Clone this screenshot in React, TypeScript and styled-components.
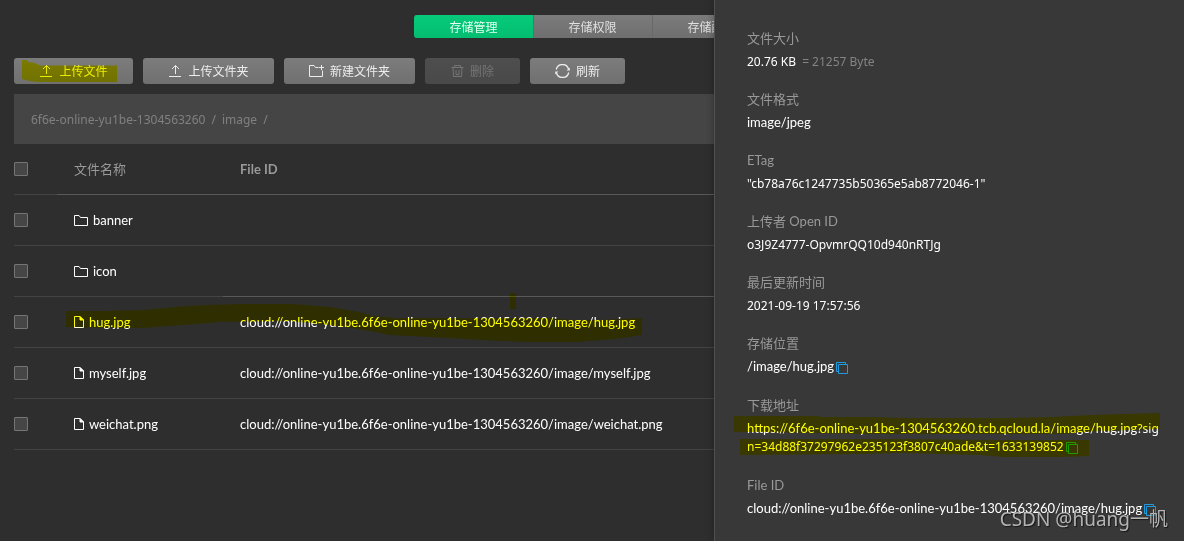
import React from "react";
import styled, { createGlobalStyle } from "styled-components";

const GlobalStyle = createGlobalStyle`
  * { box-sizing: border-box; }
  body {
    margin: 0;
    background: #2e2e2e;
    color: #fff;
    font-family: Lato, "Noto Sans CJK SC", sans-serif;
    font-size: 13px;
    line-height: 18px;
  }
  button { font: inherit; cursor: pointer; }
`;

const codeFont = `
  font-family: "Noto Sans", "Noto Sans CJK SC", sans-serif;
  font-size: 12px;
`;

const Page = styled.div`
  position: relative;
  min-height: 100vh;
  overflow: hidden;
`;

const Main = styled.main`
  padding: 15px 14px 0;
`;

const Tabs = styled.nav`
  display: flex;
  justify-content: center;
  margin-bottom: 20px;
`;

const Tab = styled.button<{ $active?: boolean }>`
  width: 119px;
  height: 23px;
  padding: 2px 0 0;
  border: 0;
  border-left: 1px solid ${(p) => (p.$active ? "#07c577" : "#696969")};
  color: ${(p) => (p.$active ? "#e6fff3" : "#e0e0e0")};
  font-size: 12px;
  background: ${(p) =>
    p.$active ? "linear-gradient(#05cb7a, #04bd70)" : "linear-gradient(#7b7b7b, #6f6f6f)"};
  &:first-child { border-radius: 3px 0 0 3px; }
  &:last-child { border-radius: 0 3px 3px 0; }
`;

const Toolbar = styled.div`
  display: flex;
  gap: 10px;
  margin-bottom: 10px;
`;

const ToolButton = styled.button<{ $width: number }>`
  position: relative;
  display: flex;
  align-items: center;
  justify-content: center;
  gap: 6px;
  width: ${(p) => p.$width}px;
  height: 26px;
  padding: 0;
  border: 0;
  border-radius: 3px;
  color: #ececec;
  font-size: 12px;
  background: linear-gradient(#7c7c7c, #707070);
  &:disabled {
    color: #757575;
    background: linear-gradient(#4e4e4e, #494949);
    cursor: default;
  }
`;

const ToolLabel = styled.span`
  padding-top: 2px;
`;

const Breadcrumb = styled.nav`
  display: flex;
  align-items: center;
  gap: 6px;
  height: 50px;
  padding: 2px 17px 0;
  color: #808080;
  background: #454545;
  ${codeFont}
`;

const Crumb = styled.a`
  color: inherit;
  text-decoration: none;
`;

const Table = styled.table`
  width: 100%;
  table-layout: fixed;
  border-collapse: separate;
  border-spacing: 0;
`;

const Cell = styled.td<{ $bright?: boolean }>`
  height: 51px;
  padding: 0 0 0 17px;
  border-bottom: 1px solid ${(p) => (p.$bright ? "#595959" : "#444")};
  text-align: left;
  font-weight: 400;
  white-space: nowrap;
`;

const HeadCell = styled(Cell)<{ $strong?: boolean }>`
  color: #999;
  font-weight: ${(p) => (p.$strong ? 700 : 400)};
`;

const CheckCell = styled(Cell)`
  padding: 0;
`;

const Col = styled.col<{ $width?: number }>`
  width: ${(p) => (p.$width ? `${p.$width}px` : "auto")};
`;

const Checkbox = styled.input`
  display: block;
  appearance: none;
  width: 14px;
  height: 14px;
  margin: 0;
  border: 1px solid #757575;
  border-radius: 1px;
  background: #464646;
`;

const FileName = styled.span`
  position: relative;
  display: flex;
  align-items: center;
  gap: 5px;
`;

const Icon = styled.svg`
  display: block;
  flex: none;
  fill: none;
  stroke: currentColor;
`;

const Marker = styled.svg<{ $left: number; $top: number }>`
  position: absolute;
  left: ${(p) => p.$left}px;
  top: ${(p) => p.$top}px;
  pointer-events: none;
  mix-blend-mode: multiply;
  z-index: 1;
`;

const Drawer = styled.aside`
  position: absolute;
  top: 0;
  right: 0;
  bottom: 0;
  width: 470px;
  padding: 29px 24px 0 32px;
  border-left: 1px solid #505050;
  background: #383838;
  box-shadow: 0 0 8px rgba(0, 0, 0, 0.3);
  z-index: 2;
`;

const Details = styled.dl`
  margin: 0;
`;

const Term = styled.dt`
  margin-bottom: 5px;
  color: #999;
`;

const Value = styled.dd<{ $copy?: boolean }>`
  position: relative;
  margin: 0 0 20px;
  padding-bottom: ${(p) => (p.$copy ? 1 : 0)}px;
  word-break: break-all;
`;

const CodeValue = styled(Value)`
  margin-bottom: 19px;
  padding-top: 1px;
  ${codeFont}
`;

const Code = styled.span`
  line-height: 1;
  ${codeFont}
`;

const Muted = styled.span`
  margin-left: 3px;
  color: #848484;
`;

const CopyButton = styled.button`
  display: inline-block;
  width: 12px;
  height: 12px;
  margin-left: 2px;
  padding: 0;
  border: 0;
  color: #1f9be0;
  background: none;
  vertical-align: -3px;
`;

const Watermark = styled.div`
  position: absolute;
  right: 16px;
  bottom: 8px;
  color: rgba(205, 205, 205, 0.85);
  font-family: "Noto Sans", "Noto Sans CJK SC", sans-serif;
  font-size: 19px;
  line-height: 28px;
  text-shadow: 1px 1px 1px rgba(0, 0, 0, 0.6);
  z-index: 3;
`;

const UploadIcon = () => (
  <Icon width="14" height="14" viewBox="0 0 14 14">
    <path d="M1 12.500h12M7.500 10V1.500M4 5l3.500-3.500L11 5" />
  </Icon>
);

const NewFolderIcon = () => (
  <Icon width="15" height="14" viewBox="0 0 15 14">
    <path d="M9.500 3.500H6.500L5 1.500H.5v11h13V6.500M12.500 1v5M10 3.500h5" />
  </Icon>
);

const TrashIcon = () => (
  <Icon width="13" height="14" viewBox="0 0 13 14">
    <path d="M.5 3.500h12M3.500 3.500v-2h6v2M2 3.500l.5 9h8l.5-9M5 6v4.500h3V6" />
  </Icon>
);

const RefreshIcon = () => (
  <Icon width="15" height="14" viewBox="0 0 15 14" strokeWidth="1.3">
    <path d="M1.300 5.500A6.300 6.300 0 0 1 13.500 5M13.700 8.500A6.300 6.300 0 0 1 1.500 9" />
    <path d="M14.800 3.500V6.500H11.500ZM.2 10.500V7.500H3.500Z" fill="currentColor" stroke="none" />
  </Icon>
);

const FolderIcon = () => (
  <Icon width="14" height="12" viewBox="0 0 14 12">
    <path d="M.5 1.500h4.500l1.500 2h7v8H.5z" />
  </Icon>
);

const FileIcon = () => (
  <Icon width="10" height="12" viewBox="0 0 10 12">
    <path d="M.5.500h5.500l3.500 3.500v7.500H.5z" />
    <path d="M6 .5V4h3.500z" fill="currentColor" />
  </Icon>
);

const Copy = () => (
  <CopyButton type="button" aria-label="复制">
    <Icon width="12" height="12" viewBox="0 0 12 12">
      <path d="M2.500 2.500h9v9h-9zM2 9.500H.5V.5h9V2" />
    </Icon>
  </CopyButton>
);

const files = [
  { name: "banner", folder: true, id: "" },
  { name: "icon", folder: true, id: "", bright: true },
  { name: "hug.jpg", marked: true, id: "cloud://online-yu1be.6f6e-online-yu1be-1304563260/image/hug.jpg" },
  { name: "myself.jpg", id: "cloud://online-yu1be.6f6e-online-yu1be-1304563260/image/myself.jpg" },
  { name: "weichat.png", id: "cloud://online-yu1be.6f6e-online-yu1be-1304563260/image/weichat.png" },
];

export default function App() {
  return (
    <Page>
      <GlobalStyle />
      <Main>
        <Tabs>
          <Tab type="button" $active>存储管理</Tab>
          <Tab type="button">存储权限</Tab>
          <Tab type="button">存储配置</Tab>
        </Tabs>

        <Toolbar>
          <ToolButton type="button" $width={119}>
            <UploadIcon />
            <ToolLabel>上传文件</ToolLabel>
            <Marker $left={8} $top={2} width="95" height="22" viewBox="0 0 95 22">
              <path fill="#ff0" d="M0 0H5L6 2 13 3 18 5.500H95V22H16L8 21 0 19Z" />
            </Marker>
          </ToolButton>
          <ToolButton type="button" $width={131}><UploadIcon /><ToolLabel>上传文件夹</ToolLabel></ToolButton>
          <ToolButton type="button" $width={131}><NewFolderIcon /><ToolLabel>新建文件夹</ToolLabel></ToolButton>
          <ToolButton type="button" $width={95} disabled><TrashIcon /><ToolLabel>删除</ToolLabel></ToolButton>
          <ToolButton type="button" $width={95}><RefreshIcon /><ToolLabel>刷新</ToolLabel></ToolButton>
        </Toolbar>

        <Breadcrumb aria-label="路径">
          <Crumb href="#root">6f6e-online-yu1be-1304563260</Crumb>
          <span>/</span>
          <Crumb href="#image">image</Crumb>
          <span>/</span>
        </Breadcrumb>

        <Table>
          <colgroup>
            <Col $width={43} />
            <Col $width={166} />
            <Col />
          </colgroup>
          <thead>
            <tr>
              <CheckCell as="th"><Checkbox type="checkbox" aria-label="全选" /></CheckCell>
              <HeadCell as="th" $bright>文件名称</HeadCell>
              <HeadCell as="th" $bright $strong>File ID</HeadCell>
            </tr>
          </thead>
          <tbody>
            {files.map((file) => (
              <tr key={file.name}>
                <CheckCell><Checkbox type="checkbox" aria-label={file.name} /></CheckCell>
                <Cell>
                  <FileName>
                    {file.folder ? <FolderIcon /> : <FileIcon />}
                    {file.name}
                    {file.marked && (
                      <Marker $left={-8} $top={-21} width="576" height="51" viewBox="66 292 576 51">
                        <path
                          fill="#ff0"
                          d="M66 311H100L143 310 175 307 205 305 245 304H292L330 307 352 311 360 312 373 316 395 318H546L575 320H600L642 318V335L615 339 576 342H530L500 341 430 337 390 335 375 332 352 328 320 324 290 321 220 322 183 325 143 328 66 327Z"
                        />
                        <path fill="#ff0" d="M510 293h6v16h-6z" />
                      </Marker>
                    )}
                  </FileName>
                </Cell>
                <Cell $bright={file.bright}>{file.id}</Cell>
              </tr>
            ))}
          </tbody>
        </Table>
      </Main>

      <Drawer>
        <Details>
          <Term>文件大小</Term>
          <CodeValue>20.76 KB <Muted>= 21257 Byte</Muted></CodeValue>
          <Term>文件格式</Term>
          <Value>image/jpeg</Value>
          <Term>ETag</Term>
          <CodeValue>"cb78a76c1247735b50365e5ab8772046-1"</CodeValue>
          <Term>上传者 Open ID</Term>
          <CodeValue>o3J9Z4777-OpvmrQQ10d940nRTJg</CodeValue>
          <Term>最后更新时间</Term>
          <CodeValue>2021-09-19 17:57:56</CodeValue>
          <Term>存储位置</Term>
          <Value $copy>/image/hug.jpg<Copy /></Value>
          <Term>下载地址</Term>
          <Value $copy>
            https://6f6e-online-yu1be-1304563260.tcb.qcloud.la/image/hug.jpg
            <Code>?sign=34d88f37297962e235123f3807c40ade&amp;t=1633139852</Code>
            <Copy />
            <Marker $left={-13} $top={-6} width="426" height="46" viewBox="734 413 426 46">
              <path
                fill="#ff0"
                d="M734 416H820V417H874L900 418 1000 418 1053 417 1090 415 1160 413V429L1100 431 1060 434 860 434 760 432H734Z"
              />
              <path fill="#ff0" d="M740 439 800 439 890 439 1000 440H1089V456L1060 457H1004L980 455 900 453 860 454 740 455Z" />
            </Marker>
          </Value>
          <Term>File ID</Term>
          <Value $copy>cloud://online-yu1be.6f6e-online-yu1be-1304563260/image/hug.jpg<Copy /></Value>
        </Details>
      </Drawer>
      <Watermark>CSDN @huang一帆</Watermark>
    </Page>
  );
}
